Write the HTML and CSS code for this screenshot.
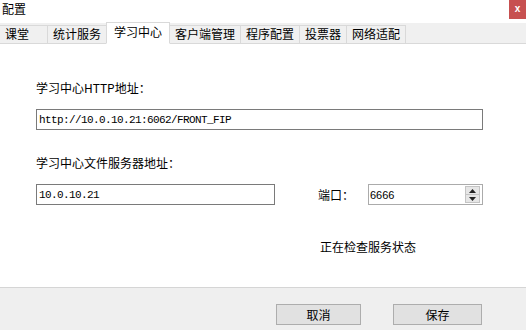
FILE: index.html
```html
<!DOCTYPE html>
<html lang="zh-CN">
<head>
  <meta charset="UTF-8" />
  <title>配置</title>
  <link rel="stylesheet" href="styles.css">
</head>
<body>
  <div class="window">
    <div class="titlebar">
      <span class="title">配置</span>
      <span class="close">x</span>
    </div>

    <nav class="tabs">
      <a class="tab first">课堂</a>
      <a class="tab">统计服务</a>
      <a class="tab active">学习中心</a>
      <a class="tab">客户端管理</a>
      <a class="tab">程序配置</a>
      <a class="tab">投票器</a>
      <a class="tab">网络适配</a>
    </nav>

    <section class="pane">
      <label class="label first">学习中心HTTP地址：</label>
      <input class="field wide" type="text" value="http://10.0.10.21:6062/FRONT_FIP" />

      <label class="label second">学习中心文件服务器地址：</label>
      <div class="row">
        <input class="field narrow" type="text" value="10.0.10.21" />
        <span class="port-label">端口：</span>
        <div class="spinbox">
          <span class="spin-value">6666</span>
          <div class="spin-buttons">
            <span class="spin-btn">
              <svg width="7" height="4" viewBox="0 0 7 4"><polygon points="3.5,0 7,4 0,4" fill="#222"/></svg>
            </span>
            <span class="spin-btn">
              <svg width="7" height="4" viewBox="0 0 7 4"><polygon points="0,0 7,0 3.5,4" fill="#222"/></svg>
            </span>
          </div>
        </div>
      </div>

      <p class="status">正在检查服务状态</p>
    </section>

    <footer class="footer">
      <button class="btn cancel">取消</button>
      <button class="btn save">保存</button>
    </footer>
  </div>
</body>
</html>
```

FILE: styles.css
```css
* { box-sizing: border-box; }
body {
  margin: 0;
  background: #fff;
  font-family: "Noto Sans CJK SC", "Liberation Sans", sans-serif;
  font-size: 12px;
  color: #000;
}
.window {
  width: 526px;
  height: 330px;
  display: flex;
  flex-direction: column;
}
.titlebar {
  height: 23px;
  display: flex;
  justify-content: space-between;
  align-items: flex-start;
}
.title {
  padding: 1px 0 0 2px;
  line-height: 16px;
}
.close {
  width: 17px;
  height: 19px;
  background: #c75050;
  color: #fff;
  font-family: "Liberation Sans", sans-serif;
  font-weight: bold;
  font-size: 10px;
  line-height: 18px;
  text-align: center;
}
.tabs {
  height: 21px;
  background: #f0f0f0;
  display: flex;
  align-items: flex-end;
  border-bottom: 1px solid #d9d9d9;
}
.tab {
  height: 19px;
  margin-bottom: -1px;
  padding: 0 5px;
  line-height: 16px;
  background: #f0f0f0;
  border: 1px solid #d9d9d9;
  margin-right: -1px;
  white-space: nowrap;
}
.tab.first {
  min-width: 48px;
  padding-left: 5px;
  border-left: none;
}
.tab.active {
  height: 22px;
  background: #fff;
  border-bottom-color: #fff;
  padding: 1px 7px 0;
  position: relative;
  z-index: 1;
}
.pane {
  height: 243px;
  padding: 36px 0 0 36px;
  display: flex;
  flex-direction: column;
  align-items: flex-start;
}
.label {
  line-height: 16px;
}
.label.second { margin-top: 25px; }
.field {
  height: 21px;
  margin: 13px 0 0;
  padding: 0 2px;
  border: 1px solid #7a7a7a;
  border-radius: 0;
  font-family: "Liberation Mono", monospace;
  font-size: 11px;
  letter-spacing: -0.6px;
  color: #000;
  outline: none;
}
.field.wide { width: 447px; }
.field.narrow { width: 239px; margin: 0; }
.row {
  margin-top: 13px;
  display: flex;
  align-items: center;
}
.port-label {
  margin-left: 43px;
  width: 50px;
}
.spinbox {
  width: 115px;
  height: 21px;
  border: 1px solid #ababab;
  display: flex;
  align-items: center;
  padding: 0 1px;
}
.spin-value {
  flex: 1;
  font-family: "Liberation Sans", sans-serif;
  font-size: 11px;
}
.spin-buttons {
  display: flex;
  flex-direction: column;
  width: 15px;
  height: 17px;
  margin-right: 1px;
}
.spin-btn {
  flex: 1;
  display: flex;
  align-items: center;
  justify-content: center;
  background: #e6e6e6;
  border: 1px solid #c4c4c4;
}
.spin-btn + .spin-btn { border-top: none; }
.status {
  margin: 34px 0 0 284px;
  line-height: 16px;
}
.footer {
  flex: 1;
  background: #efefef;
  border-top: 1px solid #d5d5d5;
  display: flex;
  justify-content: flex-end;
  align-items: flex-start;
  gap: 32px;
  padding: 16px 44px 0 0;
}
.btn {
  height: 21px;
  background: #e1e1e1;
  border: 1px solid #adadad;
  font-family: "Noto Sans CJK SC", sans-serif;
  font-size: 12px;
  line-height: 17px;
  padding: 0;
  color: #000;
}
.btn.cancel { width: 85px; }
.btn.save { width: 89px; }
```
